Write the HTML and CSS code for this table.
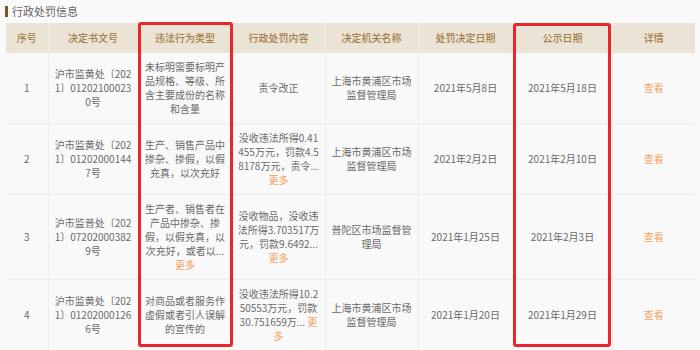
FILE: index.html
```html
<!DOCTYPE html>
<html lang="zh-CN">
<head>
<meta charset="utf-8">
<link rel="stylesheet" href="styles.css">
</head>
<body>
<div class="page">
  <div class="title"><span class="title-bar"></span>行政处罚信息</div>
  <div class="table-wrap">
    <table class="grid">
      <colgroup>
        <col class="c1"><col class="c2"><col class="c3"><col class="c4">
        <col class="c5"><col class="c6"><col class="c7"><col class="c8">
      </colgroup>
      <thead>
        <tr>
          <th>序号</th><th>决定书文号</th><th>违法行为类型</th><th>行政处罚内容</th>
          <th>决定机关名称</th><th>处罚决定日期</th><th>公示日期</th><th>详情</th>
        </tr>
      </thead>
      <tbody>
        <tr>
          <td>1</td>
          <td>沪市监黄处〔202<br>1〕01202100023<br>0号</td>
          <td>未标明需要标明产<br>品规格、等级、所<br>含主要成份的名称<br>和含量</td>
          <td>责令改正</td>
          <td>上海市黄浦区市场<br>监督管理局</td>
          <td>2021年5月8日</td>
          <td>2021年5月18日</td>
          <td><span class="link">查看</span></td>
        </tr>
        <tr>
          <td>2</td>
          <td>沪市监黄处〔202<br>1〕01202000144<br>7号</td>
          <td>生产、销售产品中<br>掺杂、掺假，以假<br>充真，以次充好</td>
          <td>没收违法所得0.41<br>455万元，罚款4.5<br>8178万元，责令...<br><span class="link">更多</span></td>
          <td>上海市黄浦区市场<br>监督管理局</td>
          <td>2021年2月2日</td>
          <td>2021年2月10日</td>
          <td><span class="link">查看</span></td>
        </tr>
        <tr>
          <td>3</td>
          <td>沪市监普处〔202<br>1〕07202000382<br>9号</td>
          <td>生产者、销售者在<br>产品中掺杂、掺<br>假，以假充真，以<br>次充好，或者以...<br><span class="link">更多</span></td>
          <td>没收物品，没收违<br>法所得3.703517万<br>元，罚款9.6492...<br><span class="link">更多</span></td>
          <td>普陀区市场监督管<br>理局</td>
          <td>2021年1月25日</td>
          <td>2021年2月3日</td>
          <td><span class="link">查看</span></td>
        </tr>
        <tr>
          <td>4</td>
          <td>沪市监黄处〔202<br>1〕01202000126<br>6号</td>
          <td>对商品或者服务作<br>虚假或者引人误解<br>的宣传的</td>
          <td>没收违法所得10.2<br>50553万元，罚款<br>30.751659万... <span class="link">更</span><br><span class="link">多</span></td>
          <td>上海市黄浦区市场<br>监督管理局</td>
          <td>2021年1月20日</td>
          <td>2021年1月29日</td>
          <td><span class="link">查看</span></td>
        </tr>
      </tbody>
    </table>
    <div class="mark mark-type"></div>
    <div class="mark mark-date"></div>
  </div>
</div>
</body>
</html>
```

FILE: styles.css
```css
html, body {
  margin: 0;
  padding: 0;
  background: #fafafa;
}
.page {
  width: 700px;
  height: 350px;
  overflow: hidden;
  padding: 4px 0 0 5px;
  box-sizing: border-box;
  font-family: "Noto Sans CJK SC", "Noto Sans", sans-serif;
  color: #666;
}
.title {
  display: flex;
  align-items: center;
  height: 14px;
  font-size: 11px;
  line-height: 14px;
  color: #666;
}
.title-bar {
  width: 3px;
  height: 11px;
  background: #7b5320;
  margin-right: 4px;
}
.table-wrap {
  position: relative;
  margin-top: 5px;
  padding-left: 1px;
}
.grid {
  table-layout: fixed;
  border-collapse: collapse;
  width: 689px;
  font-size: 10px;
  line-height: 14px;
}
.c1 { width: 42px; }
.c2 { width: 90px; }
.c3 { width: 94px; }
.c4 { width: 93px; }
.c5 { width: 93px; }
.c6 { width: 95px; }
.c7 { width: 99px; }
.c8 { width: 83px; }
.grid th {
  height: 30px;
  padding: 0;
  background: #ebe3d5;
  color: #a47d48;
  font-weight: 500;
  text-align: center;
  vertical-align: middle;
  border-right: 1px solid #f3eee6;
}
.grid td {
  padding: 7px 4px;
  text-align: center;
  vertical-align: middle;
  white-space: nowrap;
  background: #f9f9f9;
  border-bottom: 1px solid #ececec;
  border-right: 1px solid #ededed;
  color: #6a6a6a;
}
.grid td:last-child, .grid th:last-child {
  border-right: none;
}
.link {
  color: #f5a15c;
}
.mark {
  position: absolute;
  border: 3px solid #e8262b;
  border-radius: 3px;
  box-sizing: border-box;
}
.mark-type {
  left: 133px;
  top: -1px;
  width: 95px;
  height: 325px;
}
.mark-date {
  left: 508px;
  top: 0;
  width: 98px;
  height: 324px;
}
```
